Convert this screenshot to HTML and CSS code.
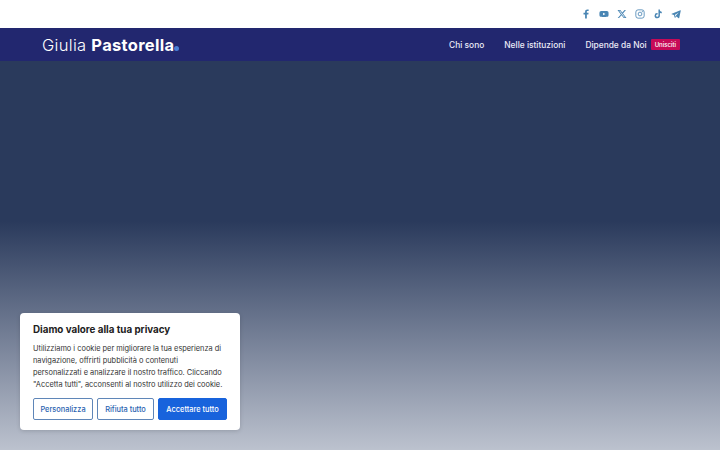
FILE: index.html
```html
<!DOCTYPE html>
<html lang="it">
  <head>
    <meta charset="UTF-8" />
    <meta name="viewport" content="width=device-width, initial-scale=1.0" />
    <title>Giulia Pastorella</title>
    <link rel="stylesheet" href="styles.css">
  </head>
  <body>
    <div class="topbar">
      <a class="social" href="#" aria-label="Facebook">
        <svg viewBox="0 0 24 24"><path d="M14 23V13h3.600l.6-4H14V6.800c0-1.200.4-2 2-2h2.300V1.200C17.900 1.100 16.600 1 15.300 1 12 1 9.800 3 9.800 6.400V9H6v4h3.800v10z"/></svg>
      </a>
      <a class="social" href="#" aria-label="YouTube">
        <svg viewBox="0 0 24 24"><path d="M22.500 7.200a2.800 2.800 0 0 0-2-2C18.800 4.700 12 4.700 12 4.700s-6.800 0-8.500.5a2.800 2.800 0 0 0-2 2C1 8.900 1 12 1 12s0 3.100.5 4.800a2.800 2.800 0 0 0 2 2c1.700.5 8.500.5 8.500.5s6.800 0 8.500-.5a2.800 2.800 0 0 0 2-2C23 15.100 23 12 23 12s0-3.100-.5-4.800zM9.800 15.200V8.800l5.700 3.200z"/></svg>
      </a>
      <a class="social" href="#" aria-label="X">
        <svg viewBox="0 0 24 24"><path d="M18.200 2.300h3.300l-7.200 8.200 8.500 11.200h-6.700l-5.200-6.800-6 6.800H1.600l7.700-8.800L1.200 2.300H8l4.700 6.200zm-1.200 17.400h1.800L7.100 4.200h-2z"/></svg>
      </a>
      <a class="social" href="#" aria-label="Instagram">
        <svg viewBox="0 0 24 24" class="outline"><rect x="2" y="2" width="20" height="20" rx="5.500"/><circle cx="12" cy="12" r="4.500"/><circle cx="17.800" cy="6.200" r=".6"/></svg>
      </a>
      <a class="social" href="#" aria-label="TikTok">
        <svg viewBox="0 0 24 24"><path d="M16.600 1h-3.500v14.800a2.900 2.900 0 1 1-2.900-2.900c.3 0 .6 0 .8.100V9.500a6.400 6.400 0 1 0 5.600 6.300V8.900a7.800 7.800 0 0 0 4.500 1.400V6.800A4.500 4.500 0 0 1 16.600 1z"/></svg>
      </a>
      <a class="social" href="#" aria-label="Telegram">
        <svg viewBox="0 0 24 24"><path d="M22.500 3.200 1.800 11.200c-.9.400-.9 1.200-.1 1.500l5.200 1.600 2 6.200c.2.600.9.700 1.300.3l2.900-2.600 5.100 3.800c.7.400 1.300.1 1.500-.7l3.700-16.800c.2-1-.3-1.500-.9-1.300zM9 14.600l9.700-6.200-7.300 7.500-.4 3.100z"/></svg>
      </a>
    </div>

    <header class="navbar">
      <a class="logo" href="#">Giulia <strong>Pastorella</strong><span class="logo-dot"></span></a>
      <nav class="menu">
        <a href="#">Chi sono</a>
        <a href="#">Nelle istituzioni</a>
        <a href="#">Dipende da Noi</a>
        <span class="badge">Unisciti</span>
      </nav>
    </header>

    <main class="hero">
      <div class="cookie-box">
        <h2>Diamo valore alla tua privacy</h2>
        <p>Utilizziamo i cookie per migliorare la tua esperienza di<br>navigazione, offrirti pubblicità o contenuti<br>personalizzati e analizzare il nostro traffico. Cliccando<br>"Accetta tutti", acconsenti al nostro utilizzo dei cookie.</p>
        <div class="cookie-buttons">
          <button class="btn btn-outline btn-custom">Personalizza</button>
          <button class="btn btn-outline btn-reject">Rifiuta tutto</button>
          <button class="btn btn-solid">Accettare tutto</button>
        </div>
      </div>
    </main>
  </body>
</html>
```

FILE: styles.css
```css
* {
  box-sizing: border-box;
}
body {
  margin: 0;
  height: 450px;
  overflow: hidden;
  font-family: Inter, "Liberation Sans", sans-serif;
  background: #fff;
  display: flex;
  flex-direction: column;
}
a {
  text-decoration: none;
  color: inherit;
}
.topbar {
  height: 28px;
  background: #fff;
  display: flex;
  align-items: center;
  justify-content: flex-end;
  gap: 8px;
  padding-right: 39px;
}
.social {
  width: 10px;
  height: 10px;
  display: flex;
}
.social svg {
  width: 10px;
  height: 10px;
  fill: #4a86b4;
}
.social svg.outline {
  fill: none;
  stroke: #4a86b4;
  stroke-width: 2;
}
.navbar {
  height: 33px;
  background: #22276f;
  display: flex;
  align-items: center;
  justify-content: space-between;
  padding: 0 40px 0 42px;
  color: #fff;
}
.logo {
  font-size: 16.5px;
  font-weight: 300;
  letter-spacing: .3px;
}
.logo strong {
  font-weight: 700;
}
.logo-dot {
  display: inline-block;
  width: 5px;
  height: 5px;
  border-radius: 50%;
  background: #4a7fd6;
}
.menu {
  display: flex;
  align-items: center;
  font-size: 8.4px;
  font-weight: 500;
  color: #ecebf7;
}
.menu a {
  margin-left: 20px;
}
.badge {
  margin-left: 4px;
  padding: 0 4px;
  height: 11px;
  line-height: 11px;
  border-radius: 1px;
  font-size: 6px;
  background: #c70a57;
  color: #fff;
}
.hero {
  flex: 1;
  position: relative;
  background: linear-gradient(180deg, #2a3a5c 0, #2a3a5c 160px, #bcc2ce 100%);
}
.cookie-box {
  position: absolute;
  left: 20px;
  bottom: 20px;
  width: 220px;
  height: 117px;
  padding: 10px 8px 10px 13px;
  background: #fff;
  border-radius: 4px;
  box-shadow: 0 1px 4px rgba(0, 0, 0, 0.15);
  color: #333;
}
.cookie-box h2 {
  margin: 0 0 7px;
  font-size: 9.8px;
  line-height: 13px;
  font-weight: 700;
  color: #212121;
}
.cookie-box p {
  margin: 0 0 7px;
  font-size: 7.4px;
  line-height: 12px;
  color: #333;
}
.cookie-buttons {
  display: flex;
  gap: 4px;
}
.btn {
  height: 22px;
  padding: 0;
  border-radius: 2px;
  font-family: inherit;
  font-size: 7.4px;
  font-weight: 500;
}
.btn-outline {
  background: #fff;
  border: 1.5px solid #5f86b8;
  color: #2a62b0;
}
.btn-custom {
  width: 60px;
}
.btn-reject {
  width: 57px;
}
.btn-solid {
  width: 69px;
  background: #1863dc;
  border: 1px solid #1863dc;
  color: #fff;
}
```
